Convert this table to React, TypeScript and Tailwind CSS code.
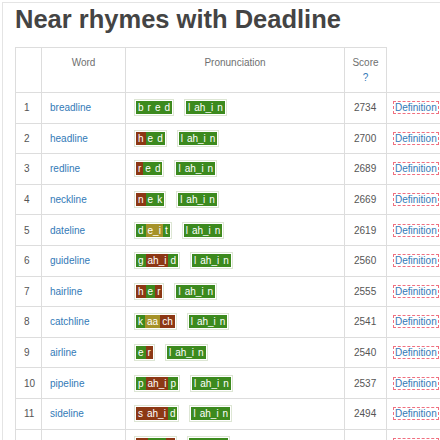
type Tone = 'g' | 'b' | 'o'
type Phone = [string, Tone]

interface Rhyme {
    word: string,
    first: Phone[],
    score: number
}

const tail: Phone[] = [['l', 'g'], ['ah_i', 'g'], ['n', 'g']]

const rhymes: Rhyme[] = [
    { word: 'breadline', first: [['b', 'g'], ['r', 'g'], ['e', 'g'], ['d', 'g']], score: 2734 },
    { word: 'headline', first: [['h', 'b'], ['e', 'g'], ['d', 'g']], score: 2700 },
    { word: 'redline', first: [['r', 'b'], ['e', 'g'], ['d', 'g']], score: 2689 },
    { word: 'neckline', first: [['n', 'b'], ['e', 'g'], ['k', 'g']], score: 2669 },
    { word: 'dateline', first: [['d', 'g'], ['e_i', 'o'], ['t', 'g']], score: 2619 },
    { word: 'guideline', first: [['g', 'g'], ['ah_i', 'b'], ['d', 'g']], score: 2560 },
    { word: 'hairline', first: [['h', 'b'], ['e', 'g'], ['r', 'b']], score: 2555 },
    { word: 'catchline', first: [['k', 'g'], ['aa', 'o'], ['ch', 'b']], score: 2541 },
    { word: 'airline', first: [['e', 'g'], ['r', 'b']], score: 2540 },
    { word: 'pipeline', first: [['p', 'g'], ['ah_i', 'b'], ['p', 'g']], score: 2537 },
    { word: 'sideline', first: [['s', 'b'], ['ah_i', 'b'], ['d', 'g']], score: 2494 },
    { word: 'mainline', first: [['m', 'b'], ['e_i', 'g'], ['n', 'b']], score: 2483 }
]

const toneClass: Record<Tone, string> = {
    g: 'bg-[#3c8a1e]',
    b: 'bg-[#8c3814]',
    o: 'bg-[#a59228]'
}

function Badge({ phones }: { phones: Phone[] }) {
    return (
        <span className="inline-flex border border-[#dde6d4] bg-white p-px">
            {phones.map((p, i) => (
                <span
                    key={i}
                    className={`${toneClass[p[1]]} px-[2px] text-[10px] leading-[13px] text-white`}
                >
                    {p[0]}
                </span>
            ))}
        </span>
    )
}

function App() {
    return (
        <div
            className="w-[440px] h-[440px] overflow-hidden bg-white pl-[2px] pt-[2px]"
            style={{ fontFamily: '"Liberation Sans", Arial, sans-serif' }}
        >
            <div className="h-full border-t border-l border-[#e4e4e4] pl-[12px]">
                <h1 className="mt-[3.5px] text-[25.5px] font-bold leading-none text-[#444] whitespace-nowrap">
                    Near rhymes with Deadline
                </h1>
                <table className="mt-[15px] w-[432px] max-w-none table-fixed border-collapse text-[10px] text-[#555]">
                    <thead>
                        <tr className="h-[45px]">
                            <th className="w-[26px] border border-[#ddd]"></th>
                            <th className="w-[84px] border border-[#ddd] pt-[7px] align-top font-normal leading-[15px] text-[#6f6f6f]">
                                Word
                            </th>
                            <th className="w-[219px] border border-[#ddd] pt-[7px] align-top font-normal leading-[15px] text-[#6f6f6f]">
                                Pronunciation
                            </th>
                            <th className="w-[42px] border border-[#ddd] pt-[7px] align-top font-normal leading-[15px] text-[#6f6f6f]">
                                Score
                                <br />
                                <span className="text-[#337ab7]">?</span>
                            </th>
                            <th className="w-[61px] border-b border-[#ddd]"></th>
                        </tr>
                    </thead>
                    <tbody>
                        {rhymes.map((r, i) => (
                            <tr key={r.word} className="h-[30.6px]">
                                <td className="border border-[#ddd] pl-[8px] align-middle">{i + 1}</td>
                                <td className="border border-[#ddd] pl-[8px] align-middle text-[#337ab7]">{r.word}</td>
                                <td className="border border-[#ddd] pl-[8px] align-middle">
                                    <div className="flex items-center gap-[10px]">
                                        <Badge phones={r.first} />
                                        <Badge phones={tail} />
                                    </div>
                                </td>
                                <td className="border border-[#ddd] pl-[9px] align-middle">{r.score}</td>
                                <td className="border-y border-l border-[#ddd] pl-[6px] align-middle whitespace-nowrap">
                                    <span className="border border-dashed border-[#f07080] px-px text-[#337ab7]">
                                        Definition
                                    </span>
                                </td>
                            </tr>
                        ))}
                    </tbody>
                </table>
            </div>
        </div>
    )
}

export default App
